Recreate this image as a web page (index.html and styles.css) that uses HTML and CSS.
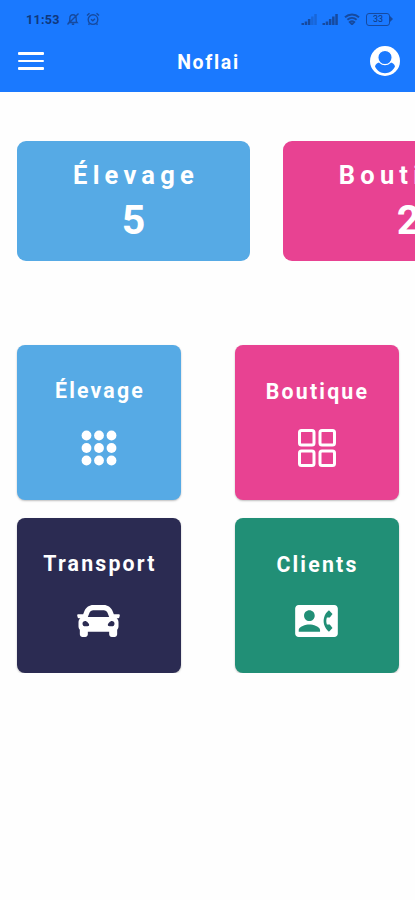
FILE: index.html
```html
<!DOCTYPE html>
<html lang="fr">
<head>
    <meta charset="UTF-8">
    <meta name="viewport" content="width=device-width, initial-scale=1.0">
    <title>Noflai</title>
    <link rel="stylesheet" href="styles.css">
</head>
<body>
    <header>
        <div class="status">
            <span class="time">11:53</span>
            <!-- silent mode -->
            <svg class="bell" width="14" height="14" viewBox="0 0 14 14">
                <path d="M3 10.5c1-1 .8-2.500.8-4C3.800 4 5 2.700 7 2.700s3.200 1.300 3.200 3.800c0 1.500-.2 3 .8 4zM5.800 12.300h2.400M1.500 12.500l11-11"/>
            </svg>
            <!-- alarm -->
            <svg class="alarm" width="14" height="14" viewBox="0 0 14 14">
                <circle cx="7" cy="7.600" r="4.800"/>
                <path d="M1 3.500L3.500 1.200M13 3.500L10.500 1.200M5 7.300l1.800 1.500L9 6.800M3.500 11.500l-1 1.300M10.500 11.500l1 1.300"/>
            </svg>
            <div class="status-right">
                <svg width="16" height="12" viewBox="0 0 16 12">
                    <path class="bar" d="M.5 12v-2h2.500v2zM3.700 12V8.500h2.500V12zM6.900 12V6h2.500v6z"/>
                    <path class="bar off" d="M10.100 12V3.500h2.500V12zM13.300 12V1h2.500v11z"/>
                </svg>
                <svg class="signal" width="16" height="12" viewBox="0 0 16 12">
                    <path class="bar" d="M.5 12v-2h2.500v2zM3.700 12V8.500h2.500V12zM6.900 12V6h2.500v6zM10.100 12V3.500h2.500V12zM13.300 12V1h2.500v11z"/>
                </svg>
                <svg class="wifi" width="16" height="12" viewBox="0 0 16 12">
                    <path d="M1 4.300c4-3.700 10-3.700 14 0M3.400 6.700c2.700-2.400 6.500-2.400 9.200 0M5.800 9c1.400-1.100 3-1.100 4.400 0L8 11.300z"/>
                </svg>
                <div class="battery">33</div>
            </div>
        </div>
        <nav>
            <button class="menu"><span></span><span></span><span></span></button>
            <h1>Noflai</h1>
            <svg class="avatar" width="30" height="30" viewBox="0 0 30 30">
                <circle cx="15" cy="15" r="15" fill="#fff"/>
                <path d="M5 20.500c.3-2.300 2.200-4 5.200-4.300 2.900 2.600 6.700 2.600 9.600 0 3 .3 4.900 2 5.200 4.300-2 4.200-5.700 6.700-10 6.700s-8-2.500-10-6.700z"/>
                <circle class="ring" cx="15" cy="11.500" r="7.200"/>
            </svg>
        </nav>
    </header>

    <main>
        <div class="slider">
            <div class="stat blue">
                <h2>Élevage</h2>
                <p>5</p>
            </div>
            <div class="stat wide pink">
                <h2>Boutique</h2>
                <p>2</p>
            </div>
        </div>

        <div class="grid">
            <a class="card blue">
                <h3>Élevage</h3>
                <svg width="36" height="36" viewBox="0 0 36 36">
                    <circle cx="5.500" cy="5.500" r="4.900"/><circle cx="18" cy="5.500" r="4.900"/><circle cx="30.500" cy="5.500" r="4.900"/>
                    <circle cx="5.500" cy="18" r="4.900"/><circle cx="18" cy="18" r="4.900"/><circle cx="30.500" cy="18" r="4.900"/>
                    <circle cx="5.500" cy="30.500" r="4.900"/><circle cx="18" cy="30.500" r="4.900"/><circle cx="30.500" cy="30.500" r="4.900"/>
                </svg>
            </a>
            <a class="card pink">
                <h3>Boutique</h3>
                <svg class="outline" width="38" height="38" viewBox="0 0 38 38">
                    <rect x="1.500" y="1.500" width="14.500" height="14.500" rx="2"/>
                    <rect x="22" y="1.500" width="14.500" height="14.500" rx="2"/>
                    <rect x="1.500" y="22" width="14.500" height="14.500" rx="2"/>
                    <rect x="22" y="22" width="14.500" height="14.500" rx="2"/>
                </svg>
            </a>
            <a class="card navy">
                <h3>Transport</h3>
                <svg width="43" height="32" viewBox="0 64 512 384">
                    <path d="M499.990 176h-59.870l-16.640-41.600C406.380 91.630 365.570 64 319.500 64h-127c-46.060 0-86.880 27.630-103.990 70.400L71.870 176H12.010C4.200 176-1.530 183.340.37 190.910l6 24C7.700 220.250 12.500 224 18.010 224h20.070C24.650 235.730 16 252.780 16 272v48c0 16.120 6.160 30.670 16 41.930V416c0 17.670 14.330 32 32 32h32c17.670 0 32-14.330 32-32v-32h256v32c0 17.670 14.330 32 32 32h32c17.670 0 32-14.330 32-32v-54.070c9.840-11.250 16-25.800 16-41.930v-48c0-19.220-8.650-36.270-22.070-48H494c5.510 0 10.310-3.750 11.640-9.090l6-24c1.890-7.570-3.840-14.910-11.650-14.910zm-352.060-17.830c7.290-18.220 24.940-30.170 44.570-30.170h127c19.630 0 37.280 11.950 44.570 30.170L384 208H128l19.930-49.830zM96 319.800c-19.200 0-32-12.760-32-31.900S76.800 256 96 256s48 28.710 48 47.850-28.800 15.950-48 15.950zm320 0c-19.200 0-48 3.190-48-15.950S396.800 256 416 256s32 12.760 32 31.900-12.800 31.900-32 31.900z"/>
                </svg>
            </a>
            <a class="card green">
                <h3>Clients</h3>
                <svg width="43" height="32" viewBox="0 3 24 18">
                    <path d="M22 3H2C.9 3 0 3.900 0 5v14c0 1.100.9 2 2 2h20c1.100 0 1.990-.9 1.990-2L24 5c0-1.100-.9-2-2-2zM8 6c1.660 0 3 1.340 3 3s-1.340 3-3 3-3-1.340-3-3 1.340-3 3-3zm6 12H2v-1c0-2 4-3.100 6-3.100s6 1.100 6 3.100v1zm3.850-4h1.640L21 16l-1.990 1.990c-1.310-.98-2.280-2.380-2.730-3.990-.18-.64-.28-1.310-.28-2s.1-1.360.28-2c.45-1.620 1.420-3.010 2.730-3.990L21 8l-1.510 2h-1.640c-.22.63-.35 1.300-.35 2s.13 1.370.35 2z"/>
                </svg>
            </a>
        </div>
    </main>
</body>
</html>
```
FILE: styles.css
```css
* {
    box-sizing: border-box;
}
body {
    margin: 0;
    font-family: Roboto, sans-serif;
    background-color: #fefefe;
    overflow-x: hidden;
}
h1, h2, h3, p {
    margin: 0;
    font-weight: bold;
    color: white;
}
svg {
    display: block;
}

/* top bar */
header {
    height: 92px;
    background-color: #1a79ff;
}
.status {
    display: flex;
    align-items: center;
    height: 38px;
    padding: 0 22px 0 26px;
    color: #10377c;
}
.status svg {
    fill: none;
    stroke: #164a9f;
    stroke-width: 1.4;
}
.status .bar {
    fill: #164a9f;
    stroke: none;
}
.status .off {
    opacity: 0.4;
}
.time {
    width: 34px;
    font-size: 12.5px;
    font-weight: bold;
    letter-spacing: 0.3px;
}
.bell {
    margin-left: 6px;
}
.alarm {
    margin-left: 6px;
}
.status-right {
    display: flex;
    align-items: center;
    margin-left: auto;
}
.signal {
    margin-left: 5px;
}
.status .wifi {
    margin-left: 6px;
    stroke-width: 1.9;
}
.battery {
    position: relative;
    width: 24px;
    height: 13px;
    margin: 0 3px 0 6px;
    border: 1.5px solid #164a9f;
    border-radius: 3px;
    font-size: 9px;
    line-height: 11px;
    text-align: center;
}
.battery::after {
    content: "";
    position: absolute;
    right: -4px;
    top: 2px;
    border-left: 3px solid #164a9f;
    border-top: 3.5px solid transparent;
    border-bottom: 3.5px solid transparent;
}

nav {
    display: flex;
    align-items: center;
    justify-content: space-between;
    height: 46px;
    padding: 0 15px 0 18px;
}
.menu {
    display: flex;
    flex-direction: column;
    gap: 5px;
    width: 29px;
    padding: 0;
    border: none;
    background: none;
}
.menu span {
    width: 25.5px;
    height: 2.8px;
    border-radius: 1px;
    background-color: white;
}
nav h1 {
    font-size: 19.5px;
    letter-spacing: 1.7px;
    line-height: 24px;
    padding-top: 3px;
}
.avatar {
    fill: #1a79ff;
}
.avatar .ring {
    stroke: white;
    stroke-width: 1.3;
}

/* counters, slide to the right */
.slider {
    display: flex;
    gap: 33px;
    padding: 49px 0 0 17px;
    overflow: hidden;
}
.stat {
    flex: none;
    width: 233px;
    height: 120px;
    padding-top: 18px;
    border-radius: 9px;
    text-align: center;
}
.wide {
    width: 251px;
}
.stat h2 {
    font-size: 25.5px;
    letter-spacing: 5.2px;
    line-height: 32px;
    margin-right: -5px;
}
.stat p {
    font-size: 41px;
    line-height: 48px;
    margin-top: 5px;
}

/* menu cards */
.grid {
    display: grid;
    grid-template-columns: 164px 164px;
    justify-content: space-between;
    row-gap: 18px;
    padding: 84px 16.5px 0 17px;
}
.card {
    display: flex;
    flex-direction: column;
    align-items: center;
    height: 155px;
    padding: 32px 0 10px;
    border-radius: 8px;
    box-shadow: 0 1px 2px rgba(0, 0, 0, 0.25);
}
.card h3 {
    font-size: 21.3px;
    letter-spacing: 2.2px;
    line-height: 28px;
    margin-right: -2px;
}
.card svg {
    margin: auto 1px auto 0;
    fill: white;
}
.pink h3, .green h3 {
    padding-top: 1px;
}
.card .outline {
    margin-right: 0;
    fill: none;
    stroke: white;
    stroke-width: 3;
}

.blue {
    background-color: #56aae5;
}
.pink {
    background-color: #e84292;
}
.navy {
    background-color: #2b2b52;
}
.green {
    background-color: #218f76;
}
```
